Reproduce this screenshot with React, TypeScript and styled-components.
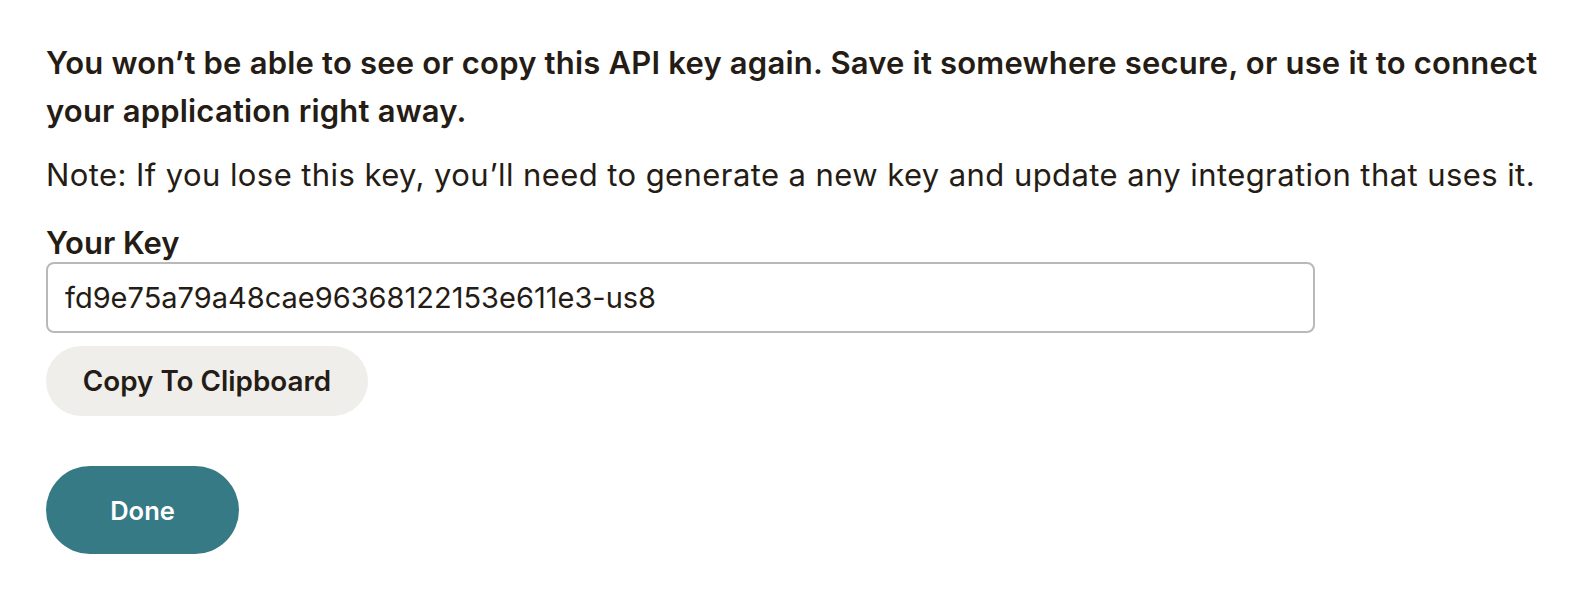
import React from "react";
import styled, { createGlobalStyle } from "styled-components";

const GlobalStyle = createGlobalStyle`
  html, body {
    margin: 0;
    padding: 0;
    background: #ffffff;
  }
  body {
    font-family: Inter, "Noto Sans", "Liberation Sans", sans-serif;
    color: #241c15;
    -webkit-font-smoothing: antialiased;
  }
  * { box-sizing: border-box; }
`;

const Page = styled.main`
  display: flex;
  flex-direction: column;
  align-items: flex-start;
  padding: 39px 46px 38px 46px;
  width: 1592px;
`;

const Warning = styled.p`
  margin: 0;
  width: 1530px;
  font-size: 31px;
  line-height: 48px;
  font-weight: 600;
  letter-spacing: 0.2px;
`;

const Note = styled.p`
  margin: 16px 0 0 0;
  font-size: 31px;
  line-height: 48px;
  font-weight: 400;
  letter-spacing: 0.42px;
`;

const Label = styled.label`
  display: block;
  margin: 25px 0 0 0;
  font-size: 31px;
  line-height: 38px;
  font-weight: 600;
`;

const KeyInput = styled.input`
  margin-top: 0;
  width: 1269px;
  height: 71px;
  padding: 0 17px;
  border: 2px solid #b9b9b9;
  border-radius: 8px;
  background: #ffffff;
  font-family: inherit;
  font-size: 29px;
  color: #241c15;
  outline: none;
`;

const PillButton = styled.button<{ $primary?: boolean }>`
  display: inline-flex;
  align-items: center;
  justify-content: center;
  border: none;
  cursor: pointer;
  font-family: inherit;
  font-weight: 600;
  border-radius: 999px;
  background: ${(p) => (p.$primary ? "#367a85" : "#efeeea")};
  color: ${(p) => (p.$primary ? "#ffffff" : "#241c15")};
  font-size: ${(p) => (p.$primary ? "25.5px" : "27.8px")};
  width: ${(p) => (p.$primary ? "193px" : "322px")};
  height: ${(p) => (p.$primary ? "88px" : "70px")};
  margin-top: ${(p) => (p.$primary ? "50px" : "13px")};
  padding: 0;
`;

export default function App() {
  return (
    <>
      <GlobalStyle />
      <Page>
        <Warning>
          You won’t be able to see or copy this API key again. Save it somewhere secure, or use it to connect
          your application right away.
        </Warning>
        <Note>
          Note: If you lose this key, you’ll need to generate a new key and update any integration that uses it.
        </Note>
        <Label htmlFor="api-key">Your Key</Label>
        <KeyInput id="api-key" readOnly value="fd9e75a79a48cae96368122153e611e3-us8" />
        <PillButton type="button">Copy To Clipboard</PillButton>
        <PillButton type="button" $primary>
          Done
        </PillButton>
      </Page>
    </>
  );
}
